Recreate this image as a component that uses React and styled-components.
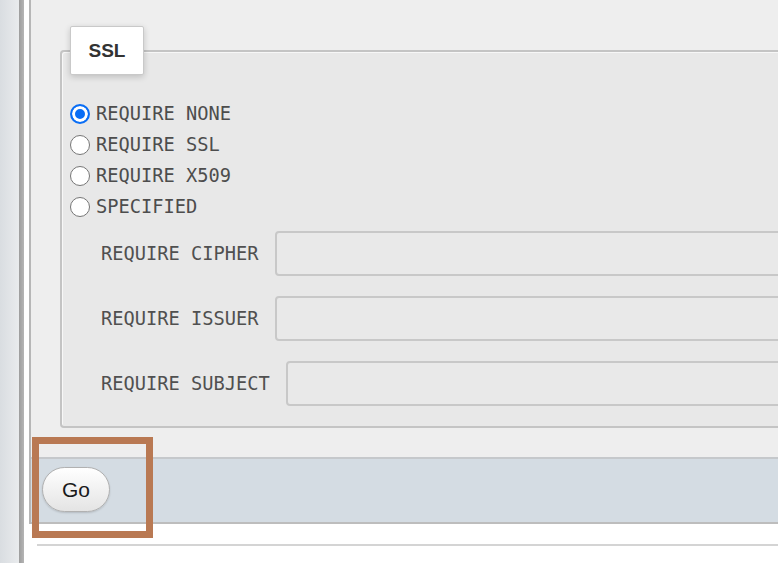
import React from 'react'
import styled, { createGlobalStyle } from 'styled-components'

const GlobalStyle = createGlobalStyle`
  html, body {
    margin: 0;
    padding: 0;
    background: #fff;
  }
  body {
    overflow: hidden;
  }
`

const Page = styled.div`
  display: flex;
  width: 778px;
  height: 563px;
  overflow: hidden;
`

const Rail = styled.div`
  width: 19px;
  flex: none;
  background: linear-gradient(to right, #d9dde1, #e9ebed);
`

const RailEdge = styled.div`
  width: 5px;
  flex: none;
  background: linear-gradient(to right, #9d9d9d, #b5b5b5);
`

const Main = styled.div`
  flex: 1;
  min-width: 0;
  background: #fff;
  padding-left: 5px;
`

const Panel = styled.div`
  width: 1000px;
  background: #eeeeee;
  border-left: 2px solid #b6b6b6;
  padding-top: 26px;
`

const Box = styled.fieldset`
  margin: 0 0 29px 29px;
  padding: 0 0 20px 8px;
  border: 2px solid #c4c4c4;
  border-radius: 4px;
  background: #e8e8e8;
  box-shadow: inset 1px 1px 0 #f7f7f7;
`

const Legend = styled.legend`
  width: 74px;
  height: 49px;
  box-sizing: border-box;
  margin: 0;
  padding: 0;
  text-align: left;
  background: #fff;
  border: 1px solid #c9c9c9;
  border-radius: 2px;
  box-shadow: 0 2px 6px rgba(0, 0, 0, 0.18);
`

const LegendText = styled.span`
  display: block;
  text-align: center;
  font: bold 19px "Liberation Sans", Arial, sans-serif;
  line-height: 47px;
  color: #333;
`

const Options = styled.div`
  display: flex;
  flex-direction: column;
  margin-top: 23px;
`

const Option = styled.label`
  display: flex;
  align-items: center;
  gap: 6px;
  height: 31px;
  font: 18.7px "DejaVu Sans Mono", monospace;
  color: #4d4d4d;
`

const Radio = styled.input.attrs({ type: 'radio' })`
  appearance: none;
  margin: 0;
  width: 20px;
  height: 20px;
  box-sizing: border-box;
  border-radius: 50%;
  border: 1.5px solid #767676;
  background: #fff;

  &:checked {
    border: 2px solid #0a6ef5;
    background: #0a6ef5;
    box-shadow: inset 0 0 0 3px #fff;
  }
`

const Fields = styled.div`
  display: flex;
  flex-direction: column;
  gap: 20px;
  margin-top: 9px;
  padding-left: 31px;
`

const Field = styled.div`
  display: flex;
  align-items: center;
  gap: 16px;
`

const FieldLabel = styled.label`
  flex: none;
  white-space: nowrap;
  font: 18.7px "DejaVu Sans Mono", monospace;
  color: #505050;
`

const TextInput = styled.input`
  flex: 1;
  height: 45px;
  box-sizing: border-box;
  border: 2px solid #c8c8c8;
  border-radius: 4px;
  background: #e9e9e9;
`

const ButtonBar = styled.div`
  position: relative;
  background: #d4dce3;
  border-top: 2px solid #c5c8cb;
  border-bottom: 2px solid #bdbdbd;
  padding: 8px 0 10px 11px;
`

const GoButton = styled.button`
  display: block;
  width: 68px;
  height: 45px;
  padding: 0;
  border: 1px solid #b1b1b1;
  border-radius: 23px;
  background: linear-gradient(#ffffff, #e4e4e4);
  box-shadow: 0 1px 2px rgba(0, 0, 0, 0.15);
  font: 21px "Liberation Sans", Arial, sans-serif;
  color: #1a1a1a;
`

const Highlight = styled.div`
  position: absolute;
  left: 1px;
  top: -22px;
  width: 121px;
  height: 101px;
  box-sizing: border-box;
  border: 7px solid #b97953;
  pointer-events: none;
`

const Rule = styled.hr`
  margin: 20px 0 0 8px;
  border: 0;
  border-top: 2px solid #d4d4d4;
`

const options = [
  { label: 'REQUIRE NONE', checked: true },
  { label: 'REQUIRE SSL' },
  { label: 'REQUIRE X509' },
  { label: 'SPECIFIED' },
]

const fields = ['REQUIRE CIPHER', 'REQUIRE ISSUER', 'REQUIRE SUBJECT']

export default function App() {
  return (
    <>
      <GlobalStyle />
      <Page>
        <Rail />
        <RailEdge />
        <Main>
          <Panel>
            <Box>
              <Legend>
                <LegendText>SSL</LegendText>
              </Legend>
              <Options>
                {options.map((o) => (
                  <Option key={o.label}>
                    <Radio name="ssl" defaultChecked={o.checked} />
                    {o.label}
                  </Option>
                ))}
              </Options>
              <Fields>
                {fields.map((f) => (
                  <Field key={f}>
                    <FieldLabel>{f}</FieldLabel>
                    <TextInput />
                  </Field>
                ))}
              </Fields>
            </Box>
            <ButtonBar>
              <GoButton>Go</GoButton>
              <Highlight />
            </ButtonBar>
          </Panel>
          <Rule />
        </Main>
      </Page>
    </>
  )
}
